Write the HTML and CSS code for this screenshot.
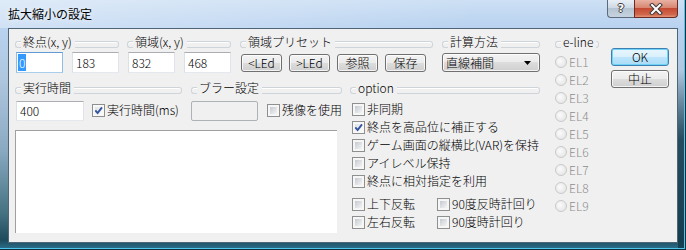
FILE: index.html
```html
<!DOCTYPE html>
<html lang="ja">
<head>
<meta charset="utf-8">
<title>拡大縮小の設定</title>
<link rel="stylesheet" href="styles.css">
</head>
<body>
<div class="window">
  <div class="titlebar">
    <span class="title">拡大縮小の設定</span>
    <div class="capbtns">
      <div class="cap help"><span class="q">?</span></div>
      <div class="cap close">
        <svg width="14" height="12" viewBox="0 0 14 12"><path d="M3 2 L11 10 M11 2 L3 10" stroke="#3a3a3a" stroke-width="4" stroke-linecap="square"/><path d="M3 2 L11 10 M11 2 L3 10" stroke="#fff" stroke-width="2" stroke-linecap="square"/></svg>
      </div>
    </div>
  </div>
  <div class="client">
    <div class="main">
      <div class="row1">
        <div class="group g-end">
          <div class="gh"><span class="cl"></span><span class="gl">終点(x, y)</span><span class="cr"></span></div>
          <div class="gc pair">
            <div class="edit focus"><span class="sel">0</span></div>
            <div class="edit">183</div>
          </div>
        </div>
        <div class="group g-area">
          <div class="gh"><span class="cl"></span><span class="gl">領域(x, y)</span><span class="cr"></span></div>
          <div class="gc pair">
            <div class="edit">832</div>
            <div class="edit">468</div>
          </div>
        </div>
        <div class="group g-preset">
          <div class="gh"><span class="cl"></span><span class="gl">領域プリセット</span><span class="cr"></span></div>
          <div class="gc btns">
            <div class="btn">&lt;LEd</div>
            <div class="btn">&gt;LEd</div>
            <div class="btn">参照</div>
            <div class="btn">保存</div>
          </div>
        </div>
        <div class="group g-calc">
          <div class="gh"><span class="cl"></span><span class="gl">計算方法</span><span class="cr"></span></div>
          <div class="gc">
            <div class="btn combo"><span>直線補間</span><svg width="7" height="4" viewBox="0 0 7 4"><polygon points="0,0 7,0 3.5,4" fill="#000"/></svg></div>
          </div>
        </div>
      </div>
      <div class="lower">
        <div class="leftcol">
          <div class="row2">
            <div class="group g-time">
              <div class="gh"><span class="cl"></span><span class="gl">実行時間</span><span class="cr"></span></div>
              <div class="gc mid">
                <div class="edit e-time">400</div>
                <span class="cb on"><svg width="7" height="7" viewBox="0 0 7 7"><path d="M0.3 3.4 L2.6 6 L7 0.4" fill="none" stroke="#34549f" stroke-width="1.9"/></svg></span>
                <span class="cbl">実行時間(ms)</span>
              </div>
            </div>
            <div class="group g-blur">
              <div class="gh"><span class="cl"></span><span class="gl">ブラー設定</span><span class="cr"></span></div>
              <div class="gc mid">
                <div class="edit disabled"></div>
                <span class="cb cb-blur"></span>
                <span class="cbl">残像を使用</span>
              </div>
            </div>
          </div>
          <div class="memo"></div>
        </div>
        <div class="group g-option">
          <div class="gh"><span class="cl"></span><span class="gl">option</span><span class="cr"></span></div>
          <div class="optlist">
            <div class="chk"><span class="cb"></span><span class="cbl">非同期</span></div>
            <div class="chk"><span class="cb on"><svg width="7" height="7" viewBox="0 0 7 7"><path d="M0.3 3.4 L2.6 6 L7 0.4" fill="none" stroke="#34549f" stroke-width="1.9"/></svg></span><span class="cbl">終点を高品位に補正する</span></div>
            <div class="chk"><span class="cb"></span><span class="cbl">ゲーム画面の縦横比(VAR)を保持</span></div>
            <div class="chk"><span class="cb"></span><span class="cbl">アイレベル保持</span></div>
            <div class="chk"><span class="cb"></span><span class="cbl">終点に相対指定を利用</span></div>
            <div class="optgrid">
              <div class="chk"><span class="cb"></span><span class="cbl">上下反転</span></div>
              <div class="chk"><span class="cb"></span><span class="cbl">90度反時計回り</span></div>
              <div class="chk"><span class="cb"></span><span class="cbl">左右反転</span></div>
              <div class="chk"><span class="cb"></span><span class="cbl">90度時計回り</span></div>
            </div>
          </div>
        </div>
      </div>
    </div>
    <div class="group eline">
      <div class="gh"><span class="cl"></span><span class="gl">e-line</span><span class="cr"></span></div>
      <div class="radios">
        <div class="rad"><span class="rd"></span><span class="rl">EL1</span></div>
        <div class="rad"><span class="rd"></span><span class="rl">EL2</span></div>
        <div class="rad"><span class="rd"></span><span class="rl">EL3</span></div>
        <div class="rad"><span class="rd"></span><span class="rl">EL4</span></div>
        <div class="rad"><span class="rd"></span><span class="rl">EL5</span></div>
        <div class="rad"><span class="rd"></span><span class="rl">EL6</span></div>
        <div class="rad"><span class="rd"></span><span class="rl">EL7</span></div>
        <div class="rad"><span class="rd"></span><span class="rl">EL8</span></div>
        <div class="rad"><span class="rd"></span><span class="rl">EL9</span></div>
      </div>
    </div>
    <div class="actions">
      <div class="btn default">OK</div>
      <div class="btn">中止</div>
    </div>
  </div>
</div>
</body>
</html>
```
FILE: styles.css
```css
html, body {
  margin: 0;
  padding: 0;
}
body {
  width: 686px;
  height: 250px;
  overflow: hidden;
  font-family: "Noto Sans CJK JP", "Noto Sans", sans-serif;
  font-weight: 300;
  font-size: 12px;
  color: #000;
  background: #1c4658;
}
.window {
  box-sizing: border-box;
  width: 686px;
  height: 250px;
  padding: 0 8px 7px 8px;
  display: flex;
  flex-direction: column;
  background:
    linear-gradient(90deg, rgba(255,255,255,0.35), rgba(255,255,255,0) 70%) left top / 100% 28px no-repeat,
    linear-gradient(180deg, rgba(18,58,76,0) 0, rgba(18,58,76,0.85) 70px) right bottom / 8px 180px no-repeat,
    linear-gradient(180deg, #cde0f4 0, #b8d2f0 28px, #aec6de 80px, #8aaac2 150px, #43707f 215px, #1d4a5c 240px, #2a6b86 248px, #5cc3e6 250px);
  box-shadow: inset -1px -1px 0 #0f2f3c, inset -2px -2px 0 #4fc4ec;
}
.titlebar {
  height: 28px;
  flex-shrink: 0;
  display: flex;
  justify-content: space-between;
  align-items: flex-start;
}
.title {
  padding-top: 6px;
  line-height: 16px;
  font-weight: 400;
  text-shadow: 0 0 6px rgba(255,255,255,0.9);
}
.capbtns {
  display: flex;
}
.cap {
  box-sizing: border-box;
  height: 18px;
  display: flex;
  align-items: center;
  justify-content: center;
  border: 1px solid #5b6b7c;
  border-top: 0;
}
.help {
  width: 27px;
  border-right: 0;
  border-radius: 0 0 0 4px;
  background: linear-gradient(#e8eef5, #cfd9e4 45%, #b6c4d2 50%, #c6d3df);
}
.q {
  font-family: "DejaVu Sans", sans-serif;
  font-weight: bold;
  font-size: 11px;
  line-height: 12px;
  color: #fff;
  text-shadow: 1px 0 0 #3a3a3a, -1px 0 0 #3a3a3a, 0 1px 0 #3a3a3a, 0 -1px 0 #3a3a3a;
}
.close {
  width: 44px;
  border-color: #6b2a22;
  border-radius: 0 0 4px 0;
  background: linear-gradient(#e9b2a3, #d88672 45%, #c54a33 50%, #d0674c 85%, #e59478);
}
.client {
  flex: 1;
  min-height: 0;
  display: flex;
  align-items: flex-start;
  background: #f0f0f0;
  border: 1px solid #4d6577;
  padding: 6px 0 0 6px;
}
.main {
  width: 525px;
  flex-shrink: 0;
}
.row1 {
  display: flex;
  gap: 8px;
}
.g-end, .g-area { width: 104px; }
.g-preset { width: 193px; margin-left: 1px; }
.g-calc { width: 98px; margin-left: 1px; }

.gh {
  display: flex;
  height: 14px;
  align-items: flex-start;
}
.gh .cl, .gh .cr {
  box-sizing: border-box;
  height: 7px;
  margin-top: 6px;
  border: 1px solid #cdd4da;
  box-shadow: inset 0 1px 0 #fff;
}
.gh .cl {
  width: 6px;
  flex-shrink: 0;
  border-right: 0;
  border-radius: 3px 0 0 3px;
}
.gh .cr {
  flex: 1;
  border-left: 0;
  border-radius: 0 3px 3px 0;
}
.gh .gl {
  padding: 0 3px 0 2px;
  line-height: 14px;
  white-space: nowrap;
}
.gc {
  display: flex;
  align-items: flex-start;
  margin-top: 3px;
}
.pair {
  padding-left: 1px;
  gap: 9px;
}
.edit {
  box-sizing: border-box;
  width: 47px;
  height: 21px;
  border: 1px solid;
  border-color: #abadb3 #e2e3ea #e3e9ef #dbdfe6;
  background: #fff;
  padding: 0 3px;
  line-height: 19px;
  white-space: nowrap;
}
.edit.focus {
  border-color: #5f9bd6 #8fbde8 #a9cdec #8fbde8;
  padding-left: 1px;
}
.sel {
  display: inline-block;
  margin-top: 1px;
  background: #3399ff;
  color: #fff;
  line-height: 17px;
  padding: 0 1px;
}
.btns {
  padding-left: 1px;
  gap: 7px;
}
.btn {
  box-sizing: border-box;
  height: 18px;
  border: 1px solid #707070;
  border-radius: 3px;
  background: linear-gradient(#f3f3f3, #ebebeb 50%, #dddddd 50%, #cfcfcf);
  box-shadow: inset 0 0 0 1px rgba(255,255,255,0.75);
  display: flex;
  align-items: center;
  justify-content: center;
  line-height: 14px;
  white-space: nowrap;
}
.btns .btn {
  width: 41px;
  margin-top: 2px;
}
.combo {
  width: 98px;
  height: 19px;
  margin-top: 1px;
  justify-content: space-between;
  padding: 0 8px 0 3px;
}
.combo svg { display: block; }
.default {
  border-color: #3c7fb1;
  background: linear-gradient(#e9f6fd, #d9f0fc 50%, #bee6fd 50%, #a9dbf6);
  box-shadow: inset 0 0 0 1px #6fd2f6;
}

.lower {
  display: flex;
  gap: 8px;
  margin-top: 8px;
}
.leftcol {
  width: 327px;
  flex-shrink: 0;
}
.row2 {
  display: flex;
  gap: 9px;
}
.g-time { width: 167px; }
.g-blur { width: 151px; }
.mid {
  margin-top: 6px;
}
.g-time .mid { padding-left: 1px; }
.e-time {
  width: 68px;
  height: 20px;
  line-height: 18px;
}
.edit.disabled {
  width: 68px;
  height: 20px;
  background: #f0f0f0;
  border: 1px solid #adb2b5;
  border-radius: 2px;
}
.mid .cb {
  margin-top: 3px;
  margin-left: 8px;
}
.mid .cb-blur { margin-left: 9px; }
.mid .cbl {
  margin-top: 1px;
}
.memo {
  box-sizing: border-box;
  margin-top: 9px;
  width: 322px;
  height: 103px;
  background: #fff;
  border-top: 1px solid #a0a0a0;
  border-left: 1px solid #a0a0a0;
}

.g-option {
  width: 190px;
}
.optlist {
  margin-top: 6px;
  padding-left: 2px;
}
.chk {
  display: flex;
  align-items: flex-start;
  height: 18px;
}
.chk .cb {
  margin-top: 2px;
}
.cb {
  box-sizing: border-box;
  width: 13px;
  height: 13px;
  flex-shrink: 0;
  border: 1px solid #8e8f8f;
  padding: 2px;
  background: linear-gradient(135deg, #c5cad1, #f4f4f4) content-box, #f6f6f6;
  display: flex;
}
.cb.on {
  background: linear-gradient(135deg, #dfe3e8, #fafafa) content-box, #f8f8f8;
}
.cb svg {
  display: block;
  overflow: visible;
}
.cbl {
  margin-left: 2px;
  line-height: 16px;
  white-space: nowrap;
}
.optgrid {
  display: grid;
  grid-template-columns: 85px auto;
  margin-top: 5px;
}

.eline {
  width: 44px;
  margin-left: 15px;
  flex-shrink: 0;
}
.radios {
  margin-top: 4px;
}
.rad {
  display: flex;
  align-items: flex-start;
  height: 18px;
}
.rd {
  box-sizing: border-box;
  width: 12px;
  height: 12px;
  margin-top: 3px;
  border-radius: 50%;
  border: 1px solid #c9c9c9;
  background: radial-gradient(circle at 40% 40%, #fbfbfb, #e0e0e0);
  flex-shrink: 0;
}
.rl {
  margin-left: 2px;
  line-height: 18px;
  color: #8d8d8d;
}
.actions {
  width: 58px;
  margin-left: 12px;
  padding-top: 13px;
  display: flex;
  flex-direction: column;
  gap: 4px;
  flex-shrink: 0;
}
```
